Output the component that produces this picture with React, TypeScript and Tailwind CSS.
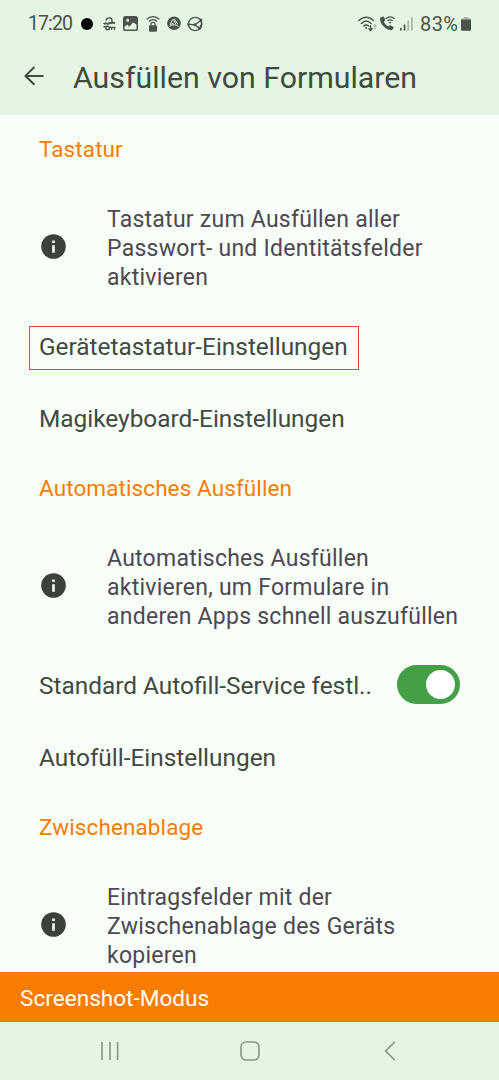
import { ReactNode } from 'react';

function StatusBar() {
  return (
    <div className="flex h-[47px] items-center pl-[28px] pr-[28px] text-[#4a524a]">
      <span className="w-[44px] whitespace-nowrap text-[19.5px] leading-none tracking-[-0.9px]">17:20</span>
      <span className="ml-[9px] h-[12px] w-[12px] rounded-full bg-black" />

      {/* notification icons */}
      <svg className="ml-[10px] h-[14px] w-[13px]" viewBox="0 0 13 14" fill="none" stroke="currentColor" strokeWidth="1.4">
        <path d="M3 3.6C3.4 1.6 4.8.9 6.2.9S8.8 1.8 9 3.4v1.8" />
        <path strokeWidth="2" d="M.8 7.2c1.4-1.8 3.4.2 5.4-.8 1.8-1 3.4-1 5.8-.4" />
        <circle cx="4.6" cy="11" r="1.8" />
        <path d="M6.4 10.4h6M8.6 10.6v2.2M11.4 10.6v2.2M.4 9.8h2.4" />
      </svg>
      <svg className="ml-[7px] h-[15px] w-[15px]" viewBox="0 0 15 15">
        <path fillRule="evenodd" fill="currentColor" d="M2.6 0h9.8A2.6 2.6 0 0 1 15 2.6v9.8a2.6 2.6 0 0 1-2.6 2.6H2.6A2.6 2.6 0 0 1 0 12.4V2.6A2.6 2.6 0 0 1 2.6 0ZM1.5 10.6v1.8c0 .7.4 1.1 1.1 1.1h9.8c.7 0 1.1-.4 1.1-1.1V8.6L10 6.6 6.2 10.8 4.2 8.6ZM4.7 2.8a1.5 1.5 0 1 0 0 3 1.5 1.5 0 0 0 0-3Z" />
      </svg>
      <svg className="ml-[7.5px] h-[16px] w-[14px]" viewBox="0 0 14 16" fill="none" stroke="currentColor">
        <path strokeWidth="1.3" d="M.6 3.4C4.2-.2 9.8-.2 13.4 3.4M3 5.4c2.4-2.2 5.6-2.2 8 0" />
        <path strokeWidth="1.3" d="M4.9 9.5V8.4a2.1 2.1 0 0 1 4.2 0v1.1" />
        <rect x="3" y="9.2" width="8" height="6.6" rx="1" fill="currentColor" stroke="none" />
      </svg>
      <svg className="ml-[7.5px] h-[15px] w-[14px]" viewBox="0 0 14 15">
        <circle cx="7" cy="7.3" r="6.8" fill="currentColor" />
        <path d="M5.8 3.4 3.2 8.4l3.4-.8M6.4 3.2 9 8.6M7.6 3.2l3.2 5M2.4 10.4c3-2.2 6.4-2 9.2.2" fill="none" stroke="#e4f5e3" strokeWidth="1" />
      </svg>
      <svg className="ml-[6px] h-[16px] w-[16px]" viewBox="0 0 16 16" fill="none" stroke="currentColor" strokeWidth="1.3">
        <circle cx="8.2" cy="8" r="6.7" />
        <path d="m1 8.2 6.8.6L14.6 4M7.8 8.8l5 3.6M14.4 4v4.4l-2 4" />
        <circle cx="14" cy="4" r="1.4" fill="currentColor" stroke="none" />
        <circle cx="7.8" cy="8.8" r="1.5" fill="currentColor" stroke="none" />
        <circle cx="12.4" cy="12.4" r="1.4" fill="currentColor" stroke="none" />
        <circle cx="1.4" cy="8.2" r="1.2" fill="currentColor" stroke="none" />
      </svg>

      {/* system icons */}
      <svg className="ml-auto h-[16px] w-[19px]" viewBox="0 0 19 16" fill="none" stroke="currentColor" strokeWidth="1.4" strokeLinecap="round">
        <path d="M.9 4.6C5.2.2 11.2.2 15.4 4.6M3.3 7.4c3-3 6.8-3 9.8 0M5.7 10c1.6-1.4 3.4-1.4 5 0" />
        <circle cx="8.2" cy="12" r="1" fill="currentColor" stroke="none" />
        <path d="M12.6 9.6v4.6m-1.6-1.4 1.6 1.6 1.6-1.6" />
        <path d="M17 13V9m-1.2 1.1L17 8.9l1.2 1.2" opacity=".4" strokeWidth="1.1" />
      </svg>
      <svg className="ml-[3px] h-[15px] w-[15px]" viewBox="0 0 15 15">
        <path fill="currentColor" d="M.7 1.6 2.8.6c.5-.2.9 0 1.1.4l1.2 2.6c.2.4.1.8-.2 1.1L3.8 5.8c.9 2.2 2.5 3.8 4.7 4.8l1.2-1c.4-.3.8-.3 1.2-.1l2.4 1.4c.4.3.5.7.3 1.1l-1 1.6c-.4.6-1 .8-1.7.7C5 13.4 0 8 0 2.8c0-.5.2-1 .7-1.2Z" />
        <path d="M5.6 2.7C8.4.4 12 .4 14.6 2.7M7.4 4.9c1.8-1.4 3.8-1.4 5.4 0" fill="none" stroke="currentColor" strokeWidth="1.2" />
        <path d="M8.7 6.2c.9-.7 1.9-.7 2.8 0l-1.4 1.6Z" fill="currentColor" />
      </svg>
      <svg className="ml-[5px] h-[14px] w-[13px]" viewBox="0 0 13 14" fill="currentColor">
        <rect x="0" y="10.8" width="1.7" height="3" rx=".8" />
        <rect x="3.7" y="7.4" width="1.7" height="6.4" rx=".8" />
        <rect x="7.4" y="3.6" width="1.7" height="10.2" rx=".8" opacity=".4" />
        <rect x="11.1" y="0" width="1.7" height="13.8" rx=".8" opacity=".4" />
      </svg>
      <span className="ml-[7px] w-[39px] whitespace-nowrap text-[20px] leading-none tracking-[0.4px]">83%</span>
      <svg className="ml-[2px] h-[14px] w-[10px]" viewBox="0 0 10 14" fill="currentColor">
        <path opacity=".4" d="M3 0h4v1.2h1.6c.8 0 1.4.6 1.4 1.4H0c0-.8.6-1.4 1.4-1.4H3Z" />
        <path d="M0 2.6h10v9.8c0 .9-.6 1.4-1.4 1.4H1.4C.6 13.8 0 13.3 0 12.4Z" />
      </svg>
    </div>
  );
}

function Category({ title }: { title: string }) {
  return (
    <h2 className="flex h-[70px] shrink-0 items-center pl-[39px] pt-px text-[22.5px] tracking-[0.1px] text-[#f97c00]">
      {title}
    </h2>
  );
}

function InfoRow({ lines }: { lines: string[] }) {
  return (
    <div className="flex h-[126px] shrink-0 items-center pl-[41px]">
      <svg className="mb-[2px] h-[25px] w-[25px]" viewBox="0 0 25 25">
        <circle cx="12.5" cy="12.5" r="12.3" fill="#3b4239" />
        <path d="M11.2 6.4h2.6V9h-2.6zM11.2 11.2h2.6v7.5h-2.6z" fill="#f8fff8" />
      </svg>
      <p className="ml-[41px] mt-[3.5px] whitespace-nowrap text-[23px] leading-[28.7px] tracking-[0.25px] text-[#4d4852]">
        {lines.map((line) => (
          <span key={line} className="block">{line}</span>
        ))}
      </p>
    </div>
  );
}

function Row({ children }: { children: ReactNode }) {
  return (
    <div className="flex h-[71.5px] shrink-0 items-center pl-[39px] pr-[39px] pt-[3px] text-[24.4px] text-[#424940]">
      {children}
    </div>
  );
}

export default function App() {
  return (
    <div className="flex h-[1080px] w-[499px] flex-col overflow-hidden bg-[#f8fff8] font-[Roboto,sans-serif]">
      <header className="h-[114.5px] shrink-0 bg-[#e4f5e3]">
        <StatusBar />
        <div className="flex h-[58px] items-center pl-[24px]">
          <svg className="h-[20px] w-[20px]" viewBox="0 0 20 20" fill="none" stroke="#424940" strokeWidth="2">
            <path d="M19.5 9.9H1.6M10.4 1 1.5 9.9l8.9 8.9" />
          </svg>
          <h1 className="ml-[29px] mt-[3px] whitespace-nowrap text-[30.3px] text-[#424940]">Ausfüllen von Formularen</h1>
        </div>
      </header>

      <main className="flex min-h-0 flex-1 flex-col overflow-hidden">
        <Category title="Tastatur" />
        <InfoRow lines={['Tastatur zum Ausfüllen aller', 'Passwort- und Identitätsfelder', 'aktivieren']} />
        <Row>
          <span className="-ml-[10px] mt-px flex h-[44px] w-[330px] items-center whitespace-nowrap border border-[#ff4040] pb-px pl-[9px]">
            Gerätetastatur-Einstellungen
          </span>
        </Row>
        <Row>Magikeyboard-Einstellungen</Row>

        <Category title="Automatisches Ausfüllen" />
        <InfoRow lines={['Automatisches Ausfüllen', 'aktivieren, um Formulare in', 'anderen Apps schnell auszufüllen']} />
        <Row>
          <span className="whitespace-nowrap">Standard Autofill-Service festl..</span>
          <button role="switch" aria-checked="true" className="mb-[4px] ml-auto flex h-[39px] w-[63px] shrink-0 items-center justify-end rounded-full bg-[#43a047] pr-[5px]">
            <span className="h-[29px] w-[29px] rounded-full bg-white" />
          </button>
        </Row>
        <Row>Autofüll-Einstellungen</Row>

        <Category title="Zwischenablage" />
        <InfoRow lines={['Eintragsfelder mit der', 'Zwischenablage des Geräts', 'kopieren']} />
      </main>

      <div className="flex h-[50px] shrink-0 items-center bg-[#f77c00] pl-[20px] pt-[3px] text-[22.6px] text-white">
        Screenshot-Modus
      </div>
      <nav className="flex h-[58px] shrink-0 items-center bg-[#e4f5e3] pl-[100px] text-[#8f998f]">
        <svg className="h-[20px] w-[20px]" viewBox="0 0 20 20" stroke="currentColor" strokeWidth="1.7">
          <path d="M2 1v18M10 1v18M17.6 1v18" />
        </svg>
        <svg className="ml-[119.5px] h-[20px] w-[20px]" viewBox="0 0 20 20" fill="none" stroke="currentColor" strokeWidth="1.7">
          <rect x="1" y="1" width="18" height="18" rx="5" />
        </svg>
        <svg className="ml-[124.5px] h-[20px] w-[12px]" viewBox="0 0 12 20" fill="none" stroke="currentColor" strokeWidth="1.7">
          <path d="M10.8.9 1.6 10l9.2 9.1" />
        </svg>
      </nav>
    </div>
  );
}
